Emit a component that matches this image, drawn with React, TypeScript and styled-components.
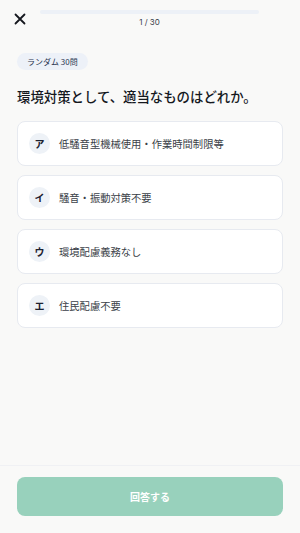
import styled, { createGlobalStyle } from "styled-components";

const GlobalStyle = createGlobalStyle`
  html, body {
    margin: 0;
    padding: 0;
    background: #f9f9f8;
  }
  body {
    font-family: "Noto Sans CJK JP", "Noto Sans", sans-serif;
    color: #1c1f26;
  }
  * {
    box-sizing: border-box;
  }
`;

const Page = styled.div`
  width: 100%;
  min-height: 100vh;
  display: flex;
  flex-direction: column;
`;

const Header = styled.header`
  display: grid;
  grid-template-columns: 40px 1fr 41px;
  align-items: start;
  padding-top: 10px;
  height: 32px;
`;

const CloseButton = styled.button`
  border: none;
  background: none;
  padding: 0;
  margin: 3px 0 0 14px;
  width: 12px;
  height: 12px;
  display: flex;
  cursor: pointer;
`;

const ProgressColumn = styled.div`
  display: flex;
  flex-direction: column;
  align-items: center;
  gap: 2px;
`;

const ProgressTrack = styled.div`
  width: 100%;
  height: 4px;
  border-radius: 2px;
  background: #edf1f7;
  overflow: hidden;
`;

const ProgressFill = styled.div`
  height: 100%;
  background: #98d1bc;
`;

const ProgressLabel = styled.span`
  font-family: "Inter", "Noto Sans", sans-serif;
  font-size: 8px;
  line-height: 12px;
  color: #3a3f4b;
`;

const Content = styled.main`
  flex: 1;
  padding: 21px 17px 0;
  display: flex;
  flex-direction: column;
`;

const Badge = styled.span`
  align-self: flex-start;
  height: 17px;
  padding: 0 10px;
  border-radius: 9px;
  background: #edf1f8;
  color: #2a3550;
  font-size: 8px;
  line-height: 17px;
`;

const Question = styled.h1`
  margin: 16px 0 15px;
  font-size: 13.4px;
  line-height: 20px;
  font-weight: 500;
  letter-spacing: 0;
  color: #15181e;
`;

const Choices = styled.div`
  display: flex;
  flex-direction: column;
  gap: 9px;
`;

const Choice = styled.button`
  width: 100%;
  height: 45px;
  border: 1px solid #e7eaf0;
  border-radius: 8px;
  background: #ffffff;
  display: flex;
  align-items: center;
  gap: 9px;
  padding: 0 11px;
  font-family: inherit;
  cursor: pointer;
  text-align: left;
`;

const ChoiceMark = styled.span`
  width: 21px;
  height: 21px;
  border-radius: 50%;
  background: #eef2f7;
  display: flex;
  align-items: center;
  justify-content: center;
  font-size: 10px;
  font-weight: 700;
  color: #1c2130;
  flex-shrink: 0;
`;

const ChoiceText = styled.span`
  font-size: 10.3px;
  color: #3b3f48;
`;

const Footer = styled.footer`
  border-top: 1px solid #f0f1f4;
  padding: 11px 17px 17px;
`;

const SubmitButton = styled.button`
  width: 100%;
  height: 39px;
  border: none;
  border-radius: 8px;
  background: #98d1bc;
  color: #ffffff;
  font-family: inherit;
  font-size: 10px;
  font-weight: 700;
`;

const choices = [
  { mark: "ア", text: "低騒音型機械使用・作業時間制限等" },
  { mark: "イ", text: "騒音・振動対策不要" },
  { mark: "ウ", text: "環境配慮義務なし" },
  { mark: "エ", text: "住民配慮不要" },
];

function CloseIcon() {
  return (
    <svg width="12" height="12" viewBox="0 0 12 12">
      <path d="M1.5 1.5L10.5 10.5M10.5 1.5L1.5 10.5" stroke="#15181e" strokeWidth="1.8" strokeLinecap="round" />
    </svg>
  );
}

export default function App() {
  const current = 1;
  const total = 30;
  return (
    <Page>
      <GlobalStyle />
      <Header>
        <CloseButton aria-label="閉じる">
          <CloseIcon />
        </CloseButton>
        <ProgressColumn>
          <ProgressTrack>
            <ProgressFill style={{ width: `${((current - 1) / total) * 100}%` }} />
          </ProgressTrack>
          <ProgressLabel>
            {current} / {total}
          </ProgressLabel>
        </ProgressColumn>
        <div />
      </Header>
      <Content>
        <Badge>ランダム 30問</Badge>
        <Question>環境対策として、適当なものはどれか。</Question>
        <Choices>
          {choices.map((c) => (
            <Choice key={c.mark}>
              <ChoiceMark>{c.mark}</ChoiceMark>
              <ChoiceText>{c.text}</ChoiceText>
            </Choice>
          ))}
        </Choices>
      </Content>
      <Footer>
        <SubmitButton>回答する</SubmitButton>
      </Footer>
    </Page>
  );
}
